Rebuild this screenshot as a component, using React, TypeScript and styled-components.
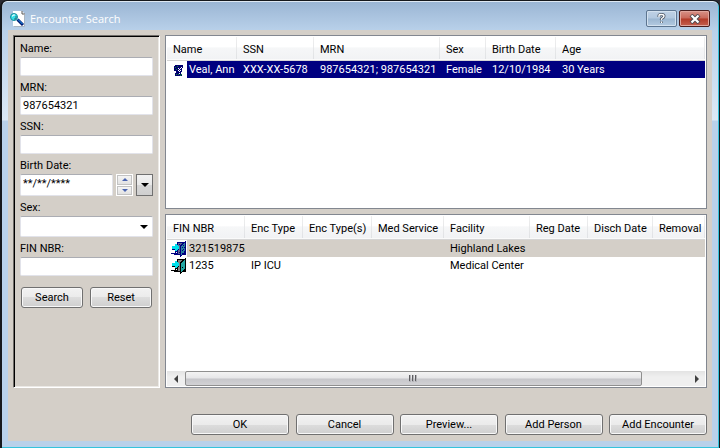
import React from "react";
import styled, { createGlobalStyle, css } from "styled-components";

const GlobalStyle = createGlobalStyle`
  * { box-sizing: border-box; }
  body {
    margin: 0;
    background: #2b2b33;
    color: #000;
    font: 11px/17px Roboto, "Liberation Sans", sans-serif;
  }
  button, input, select { font: inherit; color: inherit; }
  svg { flex: none; }
`;

const Window = styled.div`
  min-height: 100vh;
  display: flex;
  flex-direction: column;
  padding: 0 7px 7px 6px;
  border: solid #16181c;
  border-width: 1px 1px 0 2px;
  border-radius: 7px 7px 0 0;
  box-shadow: inset -1px -1px 0 #35c3dc, inset 0 1px 0 #dfe9f3;
  background: linear-gradient(#9ab5d3 0, #b9d1ea 30px, #dce9f6 119px, #b9d1ea 120px);
`;

const TitleBar = styled.header`
  height: 29px;
  display: flex;
  align-items: center;
  gap: 4px;
  padding: 6px 2px 0;
`;

const Title = styled.h1`
  flex: 1;
  margin: 0;
  font: 11px/18px "Open Sans", "Noto Sans", sans-serif;
  color: #fff;
`;

const CaptionButton = styled.button<{ $close?: boolean }>`
  display: grid;
  place-items: center;
  width: 31px;
  height: 17px;
  margin-left: -2px;
  padding: 0;
  border: 1px solid ${(p) => (p.$close ? "#491d1d" : "#5d7590")};
  border-radius: 2px;
  box-shadow: inset 0 0 0 1px ${(p) => (p.$close ? "#e0a59c" : "#d3e1ef")};
  background: ${(p) =>
    p.$close
      ? "linear-gradient(#d79288, #c9685a 48%, #b23a28 52%, #c4604f)"
      : "linear-gradient(#bfd1e5, #b2c8df 48%, #9bb6d1 52%, #b3cae1)"};
`;

const Client = styled.main`
  flex: 1;
  display: flex;
  flex-direction: column;
  padding: 5px 5px 6px;
  background: #d4cfc8;
`;

const Columns = styled.div`
  flex: 1;
  display: flex;
  gap: 5px;
`;

const SearchForm = styled.form`
  flex: none;
  width: 147px;
  padding: 1px 6px;
  border: 1px solid;
  border-color: #6f6c68 #fff #fff #6f6c68;
  box-shadow: inset 1px 1px 0 #000, inset -1px -1px 0 #ebe9e5;
`;

const Label = styled.label`
  display: block;
  height: 20px;
  padding-top: 4px;
  line-height: 16px;
`;

const field = css`
  display: block;
  width: 100%;
  height: 19px;
  padding: 0 2px;
  border: 1px solid #e2e3ea;
  border-top-color: #abadb3;
  border-radius: 2px;
  background: #fff;
`;

const TextInput = styled.input<{ $tall?: boolean }>`
  ${field}
  ${(p) => p.$tall && "height: 22px; flex: 1; min-width: 0; padding-bottom: 3px;"}
`;

const DateRow = styled.div`
  display: flex;
  gap: 3px;
`;

const Spinner = styled.div`
  display: flex;
  flex-direction: column;
  gap: 1px;
  width: 17px;
  padding: 1px;
  background: #fff;
`;

const SpinButton = styled.button`
  flex: 1;
  display: grid;
  place-items: center;
  padding: 0;
  border: 1px solid #c3c3c3;
  background: linear-gradient(#f4f4f4, #e2e2e2);
`;

const DropButton = styled.button`
  display: grid;
  place-items: center;
  width: 17px;
  padding: 0;
  border: 1px solid #707070;
  background: linear-gradient(#f2f2f2, #e8e8e8 50%, #d6d6d6 50%, #cfcfcf);
`;

const SelectWrap = styled.div`
  display: grid;
  align-items: center;
  & > * { grid-area: 1 / 1; }
  & > svg { justify-self: end; margin-right: 5px; pointer-events: none; }
`;

const Select = styled.select`
  ${field}
  height: 21px;
  appearance: none;
`;

const Button = styled.button<{ $wide?: boolean }>`
  width: ${(p) => (p.$wide ? 98 : 62)}px;
  height: 21px;
  padding: 0;
  border: 1px solid #707070;
  border-radius: 3px;
  box-shadow: inset 0 0 0 1px #f8f8f8;
  background: linear-gradient(#f2f2f2, #ebebeb 50%, #dddddd 50%, #cfcfcf);
`;

const FormButtons = styled.div`
  display: flex;
  justify-content: space-between;
  padding: 11px 1px 0;
`;

const Lists = styled.div`
  flex: 1;
  min-width: 0;
  display: flex;
  flex-direction: column;
  gap: 5px;
`;

const ListPanel = styled.section`
  flex: 1 1 0;
  display: flex;
  flex-direction: column;
  justify-content: space-between;
  padding: 1px;
  border: 1px solid #828790;
  background: #fff;
`;

const Table = styled.table`
  width: 100%;
  table-layout: fixed;
  border-collapse: separate;
  border-spacing: 0;
  white-space: nowrap;
`;

const HeadCell = styled.th`
  height: 24px;
  padding: 2px 0 0 6px;
  border-bottom: 1px solid #d5d5d5;
  text-align: left;
  font-weight: normal;
  background:
    linear-gradient(#efefef, #dfe1e4) right / 1px 100% no-repeat,
    linear-gradient(#fff 45%, #f6f7f8 46%, #f1f2f4);
  box-shadow: inset 0 -1px 0 #fafafa;
`;

const Row = styled.tr<{ $tone?: "active" | "muted" }>`
  --row: ${(p) => (p.$tone === "active" ? "#000080" : p.$tone === "muted" ? "#d4cfc8" : "#fff")};
  color: ${(p) => (p.$tone === "active" ? "#fff" : "#000")};
`;

const Cell = styled.td`
  height: 17px;
  padding: 0 0 0 6px;
  line-height: 17px;
  background: var(--row);
`;

const IconCell = styled(Cell)`
  padding: 0;
  background: linear-gradient(90deg, #fff 20px, var(--row) 20px);
`;

const IconCellBody = styled.div`
  display: flex;
  align-items: center;
  gap: 2px;
  height: 17px;
  padding-left: 4px;
`;

const ScrollBar = styled.div`
  display: grid;
  grid-template-columns: 18px minmax(0, 457fr) minmax(0, 46fr) 17px;
  height: 15px;
  background: linear-gradient(#e3e3e3, #efefef 40%);
`;

const ScrollButton = styled.button`
  display: grid;
  place-items: center;
  padding: 0;
  border: 0;
  background: transparent;
`;

const Thumb = styled.div`
  display: grid;
  place-items: center;
  border: 1px solid #8f8f8f;
  border-radius: 2px;
  background: linear-gradient(#f3f3f3, #e6e6e8 48%, #c6c6ca 52%, #d2d2d5);
`;

const Footer = styled.footer`
  display: flex;
  justify-content: space-between;
  width: 516px;
  margin: 26px 0 0 auto;
`;

const Triangle = ({ dir, color = "#000", size = 8 }: { dir: "up" | "down" | "left" | "right"; color?: string; size?: number }) => {
  const paths = { up: "M0 4 4 0 8 4Z", down: "M0 0H8L4 4Z", left: "M4 0V8L0 4Z", right: "M0 0V8L4 4Z" };
  const flat = dir === "up" || dir === "down";
  const half = Math.ceil(size / 2);
  return (
    <svg width={flat ? size : half} height={flat ? half : size} viewBox={flat ? "0 0 8 4" : "0 0 4 8"} aria-hidden="true">
      <path d={paths[dir]} fill={color} />
    </svg>
  );
};

const SearchPageIcon = () => (
  <svg width="16" height="16" viewBox="0 0 16 16" aria-hidden="true">
    <path d="M3 0H12L15 3V15H3Z" fill="#fff" />
    <path d="M12 0V3H15" fill="none" stroke="#555" />
    <path d="M14.5 4V15.5H4" fill="none" stroke="#a9b4c0" />
    <path d="M7.5 8.5 13 14" stroke="#001a70" strokeWidth="3" />
    <path d="M8 8.5 12.5 13" stroke="#22a4ff" strokeWidth="1" />
    <circle cx="4" cy="6" r="3.5" fill="#35dfe8" stroke="#168c9c" />
    <path d="M2 5h1V4h2" stroke="#fff" fill="none" />
    <path d="M6 5v3H4" stroke="#286a78" fill="none" />
  </svg>
);

const PersonIcon = () => (
  <svg width="16" height="16" viewBox="0 0 16 16" shapeRendering="crispEdges" aria-hidden="true">
    <path d="M4 3H12V6H11V10H10V12H11V14H4V11H5V9H3V4H4Z" fill="#000070" />
    <path d="M7 6h1v1H7zM9 6h1v1H9zM8 7h1v1H8zM7 8h1v1H7zM9 8h1v1H9zM8 9h1v1H8zM10 5h1v1h-1zM8 11h1v1H8z" fill="#fff" />
    <path d="M4 5h1v1H4zM6 4h1v1H6zM5 7h1v1H5zM5 12h1v1H5zM7 12h1v1H7zM10 12h1v1h-1zM9 13h1v1H9z" fill="#138a32" />
  </svg>
);

const DoorIcon = ({ selected }: { selected?: boolean }) => {
  const line = selected ? "#000080" : "#000";
  return (
    <svg width="16" height="16" viewBox="0 0 16 16" shapeRendering="crispEdges" aria-hidden="true">
      <path d="M6 1H15V14H6Z" fill={line} />
      <path d="M7 2H14V13H7Z" fill={selected ? "#60658c" : "#808080"} />
      <path d="M9 4 15 0V12L9 16Z" fill={line} />
      <path d="M10 5 14 2V11L10 14Z" fill={selected ? "#2b7f9e" : "#22a8a4"} />
      <path d="M11 9h1v1h-1z" fill={line} />
      {selected && (
        <path
          d="M8 3h1v1H8zM10 3h1v1h-1zM12 4h1v1h-1zM11 6h1v1h-1zM13 6h1v1h-1zM12 8h1v1h-1zM13 10h1v1h-1zM11 12h1v1h-1zM8 11h1v1H8z"
          fill="#000080"
        />
      )}
      <path d="M1 8H4V10H5L8 7V8L5 12H4V9H1Z" fill={line} />
      <path d="M1 5H4V3H5L8 6V7L5 10H4V8H1Z" fill="#00e0ec" />
      <path d="M0 12H6V13H0ZM3 13H9V14H3Z" fill={line} />
    </svg>
  );
};

const HelpGlyph = () => (
  <svg width="9" height="11" viewBox="0 0 9 11" aria-hidden="true">
    <path d="M2 4V2.5Q2 1.5 4.5 1.5T7 3Q7 4.2 5.5 5T4.5 7M4.5 8.5V10" fill="none" stroke="#4c5765" strokeWidth="3" />
    <path d="M2 4V2.5Q2 1.5 4.5 1.5T7 3Q7 4.2 5.5 5T4.5 7M4.5 8.5V10" fill="none" stroke="#fff" strokeWidth="1.4" />
  </svg>
);

const CloseGlyph = () => (
  <svg width="12" height="10" viewBox="0 0 12 10" aria-hidden="true">
    <path d="M2 1 10 9M10 1 2 9" stroke="#4e4a50" strokeWidth="4" />
    <path d="M2.5 1.5 9.5 8.5M9.5 1.5 2.5 8.5" stroke="#fff" strokeWidth="2.2" />
  </svg>
);

const Grip = () => (
  <svg width="9" height="7" viewBox="0 0 9 7" shapeRendering="crispEdges" aria-hidden="true">
    <path d="M0 0h2v7H0zM3 0h2v7H3zM6 0h2v7H6z" fill="#b4b4b8" />
    <path d="M0 0h1v6H0zM3 0h1v6H3zM6 0h1v6H6z" fill="#5c5c60" />
  </svg>
);

const Field = ({ id, label, value = "" }: { id: string; label: string; value?: string }) => (
  <>
    <Label htmlFor={id}>{label}</Label>
    <TextInput id={id} defaultValue={value} />
  </>
);

type Column = { title: string; width?: number };

const personColumns: Column[] = [
  { title: "Name", width: 70 },
  { title: "SSN", width: 77 },
  { title: "MRN", width: 126 },
  { title: "Sex", width: 46 },
  { title: "Birth Date", width: 70 },
  { title: "Age" },
];

const encounterColumns: Column[] = [
  { title: "FIN NBR", width: 78 },
  { title: "Enc Type", width: 58 },
  { title: "Enc Type(s)", width: 69 },
  { title: "Med Service", width: 72 },
  { title: "Facility", width: 86 },
  { title: "Reg Date", width: 58 },
  { title: "Disch Date", width: 65 },
  { title: "Removal" },
];

type RowData = { icon: React.ReactNode; tone?: "active" | "muted"; cells: string[] };

const persons: RowData[] = [
  {
    icon: <PersonIcon />,
    tone: "active",
    cells: ["Veal, Ann", "XXX-XX-5678", "987654321; 987654321", "Female", "12/10/1984", "30 Years"],
  },
];

const encounters: RowData[] = [
  { icon: <DoorIcon selected />, tone: "muted", cells: ["321519875", "", "", "", "Highland Lakes", "", "", ""] },
  { icon: <DoorIcon />, cells: ["1235", "IP ICU", "", "", "Medical Center", "", "", ""] },
];

const DataTable = ({ label, columns, rows }: { label: string; columns: Column[]; rows: RowData[] }) => (
  <Table aria-label={label}>
    <colgroup>
      {columns.map((c) => (
        <col key={c.title} width={c.width} />
      ))}
    </colgroup>
    <thead>
      <tr>
        {columns.map((c) => (
          <HeadCell key={c.title} scope="col">{c.title}</HeadCell>
        ))}
      </tr>
    </thead>
    <tbody>
      {rows.map((row) => (
        <Row key={row.cells[0]} $tone={row.tone}>
          <IconCell>
            <IconCellBody>
              {row.icon}
              {row.cells[0]}
            </IconCellBody>
          </IconCell>
          {row.cells.slice(1).map((text, i) => (
            <Cell key={i}>{text}</Cell>
          ))}
        </Row>
      ))}
    </tbody>
  </Table>
);

export default function App() {
  return (
    <>
      <GlobalStyle />
      <Window>
        <TitleBar>
          <SearchPageIcon />
          <Title>Encounter Search</Title>
          <CaptionButton aria-label="Help"><HelpGlyph /></CaptionButton>
          <CaptionButton $close aria-label="Close"><CloseGlyph /></CaptionButton>
        </TitleBar>
        <Client>
          <Columns>
            <SearchForm onSubmit={(e) => e.preventDefault()}>
              <Field id="name" label="Name:" />
              <Field id="mrn" label="MRN:" value="987654321" />
              <Field id="ssn" label="SSN:" />
              <Label htmlFor="birth">Birth Date:</Label>
              <DateRow>
                <TextInput id="birth" $tall defaultValue="**/**/****" />
                <Spinner>
                  <SpinButton type="button" aria-label="Increase"><Triangle dir="up" color="#4a64b0" size={6} /></SpinButton>
                  <SpinButton type="button" aria-label="Decrease"><Triangle dir="down" color="#4a64b0" size={6} /></SpinButton>
                </Spinner>
                <DropButton type="button" aria-label="Open calendar"><Triangle dir="down" /></DropButton>
              </DateRow>
              <Label htmlFor="sex">Sex:</Label>
              <SelectWrap>
                <Select id="sex" defaultValue="">
                  <option value=""></option>
                </Select>
                <Triangle dir="down" />
              </SelectWrap>
              <Field id="fin" label="FIN NBR:" />
              <FormButtons>
                <Button type="submit">Search</Button>
                <Button type="reset">Reset</Button>
              </FormButtons>
            </SearchForm>
            <Lists>
              <ListPanel>
                <DataTable label="Persons" columns={personColumns} rows={persons} />
              </ListPanel>
              <ListPanel>
                <DataTable label="Encounters" columns={encounterColumns} rows={encounters} />
                <ScrollBar>
                  <ScrollButton aria-label="Scroll left"><Triangle dir="left" color="#404040" /></ScrollButton>
                  <Thumb><Grip /></Thumb>
                  <span />
                  <ScrollButton aria-label="Scroll right"><Triangle dir="right" color="#404040" /></ScrollButton>
                </ScrollBar>
              </ListPanel>
            </Lists>
          </Columns>
          <Footer>
            {["OK", "Cancel", "Preview...", "Add Person", "Add Encounter"].map((text) => (
              <Button key={text} type="button" $wide>{text}</Button>
            ))}
          </Footer>
        </Client>
      </Window>
    </>
  );
}
